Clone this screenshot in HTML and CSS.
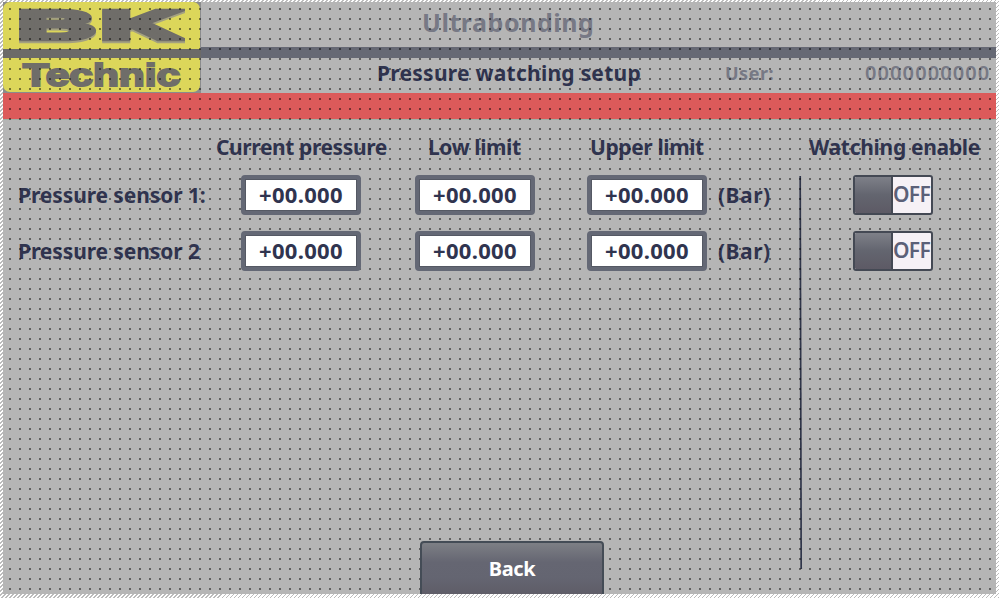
FILE: index.html
```html
<!DOCTYPE html>
<html lang="en">
<head>
<meta charset="utf-8">
<title>Pressure watching setup</title>
<link rel="stylesheet" href="styles.css">
</head>
<body>
<div class="frame">
<main class="screen">
  <header class="header">
    <svg class="logo" width="198" height="91" viewBox="0 0 198 91" aria-label="BK Technic">
      <path class="logo-corner" d="M0 0H198V91H0Z"/>
      <rect class="logo-plate" x="0" y="0" width="197" height="90" rx="7"/>
      <g class="logo-name">
        <text x="15" y="36.5" font-size="40" textLength="77" lengthAdjust="spacingAndGlyphs">B</text>
        <text x="98" y="36.5" font-size="40" textLength="79" lengthAdjust="spacingAndGlyphs">K</text>
      </g>
      <rect class="logo-bar" x="0" y="47" width="198" height="9"/>
      <text class="logo-sub" x="20" y="84" font-size="31" textLength="157" lengthAdjust="spacingAndGlyphs">Technic</text>
    </svg>
    <div class="heads">
      <div class="title"><span>Ultrabonding</span></div>
      <div class="rule"></div>
      <div class="subrow">
        <h1 class="subtitle">Pressure watching setup</h1>
        <span class="user">User:</span>
        <span class="user-id">0000000000</span>
      </div>
    </div>
  </header>
  <div class="alarm"></div>
  <div class="content">
    <section class="table">
      <span></span>
      <span class="label h1">Current pressure</span>
      <span class="label h2">Low limit</span>
      <span class="label h3">Upper limit</span>
      <span></span>

      <span class="label s1">Pressure sensor 1:</span>
      <span class="field"><span>+00.000</span></span>
      <span class="field"><span>+00.000</span></span>
      <span class="field"><span>+00.000</span></span>
      <span class="label unit">(Bar)</span>

      <span class="label s2">Pressure sensor 2</span>
      <span class="field"><span>+00.000</span></span>
      <span class="field"><span>+00.000</span></span>
      <span class="field"><span>+00.000</span></span>
      <span class="label unit">(Bar)</span>
    </section>
    <svg class="divider" width="4" height="393" viewBox="0 0 4 393"><path d="M1.2 0L2.2 393"/></svg>
    <section class="enable">
      <span class="label h4">Watching enable</span>
      <span class="switch"><i></i><b>OFF</b></span>
      <span class="switch"><i></i><b>OFF</b></span>
    </section>
  </div>
  <footer class="footer"><button class="back">Back</button></footer>
</main>
</div>
</body>
</html>
```
FILE: styles.css
```css
* { box-sizing: border-box; }
body { margin: 0; overflow: hidden; font-family: "Noto Sans", "Open Sans", sans-serif; font-weight: 600; }
.frame {
  width: 999px; height: 598px; padding: 2px 3px 4px 3px;
  background: repeating-linear-gradient(135deg, #fff 0 1.8px, #bcbcbc 1.8px 2.83px);
}
.screen {
  position: relative; width: 993px; height: 592px; overflow: hidden;
  display: flex; flex-direction: column; background: #b5b5b5; color: #30344f;
}
/* editor grid, drawn over static objects */
.screen::after {
  content: ""; position: absolute; inset: 0; z-index: 1; pointer-events: none;
  background: conic-gradient(from 270deg at 2px 2px, rgba(0,0,0,.47) 90deg, transparent 0) 6px 6px / 10px 10px;
}
.header { display: flex; height: 91px; }
.logo { display: block; flex: none; }
.logo-corner { fill: #8a8b8c; }
.logo-plate { fill: #dcd65a; }
.logo-bar { fill: #6b6a68; }
.logo-name, .logo-sub { font-family: "Liberation Sans", sans-serif; font-weight: 700; }
.logo-name { fill: #6f6d69; stroke: #6f6d69; stroke-width: 4.5; filter: drop-shadow(0 2px 0 #a3a080); }
.logo-sub { fill: #6f6d69; stroke: #6f6d69; stroke-width: 2; }
.heads { flex: 1; display: flex; flex-direction: column; }
.title { height: 45px; padding: 1px 0 0 221px; font-size: 25px; line-height: 39px; color: #777985; font-weight: 700; letter-spacing: .55px; }
.rule { height: 11px; background: #666974; }
.subrow { display: flex; height: 35px; padding-bottom: 5px; align-items: center; white-space: nowrap; }
.subtitle { margin: 0 0 0 176px; width: 348px; font: 700 21px/28px "Noto Sans", sans-serif; letter-spacing: .25px; }
.user { width: 140px; font-size: 18px; line-height: 28px; color: #777985; font-weight: 700; letter-spacing: .5px; }
.user-id { font-size: 20px; line-height: 28px; color: #777985; letter-spacing: 1.1px; }
.alarm { height: 27px; flex: none; background: #dc5a5a; border-bottom: 1px solid #a1afa4; }
.content { display: flex; height: 449px; flex: none; }
.label { white-space: nowrap; font-size: 21px; line-height: 28px; font-weight: 700; letter-spacing: -.4px; }
.table {
  width: 796px; padding-top: 13px; display: grid; align-content: start;
  grid-template-columns: 223px 174px 172px 146px 80px;
  grid-template-rows: 42px 56px 56px;
}
.s1, .s2 { padding-left: 15px; padding-top: 6px; letter-spacing: -.1px; }
.h1 { margin-left: -10px; }
.h2 { margin-left: 28px; }
.h3 { margin-left: 18px; }
.unit { padding: 6px 0 0 0; letter-spacing: .5px; }
.h1, .h2, .h3 { justify-self: start; }
.field {
  position: relative; z-index: 2; width: 120px; height: 40px; margin-left: 15px;
  border: 4px solid #646875; border-radius: 4px; background: #fff;
  box-shadow: inset 0 0 0 1px #555964;
  display: flex; align-items: center; justify-content: center;
  padding-bottom: 3px; font-size: 22px; line-height: 30px; font-weight: 700; letter-spacing: .3px;
}
.divider { flex: none; margin-top: 56px; }
.divider path { stroke: #30364a; stroke-width: 1.7; }
.enable { width: 193px; padding: 13px 0 0 6px; display: grid; grid-template-rows: 42px 56px 56px; align-content: start; }
.h4 { letter-spacing: -.3px; }
.switch {
  position: relative; z-index: 2; width: 80px; height: 40px; margin-left: 44px; display: flex;
  border: 2px solid #444954; border-radius: 3px; overflow: hidden; background: #f6f1f6;
}
.switch i { width: 38px; flex: none; border-right: 2px solid #444954; background: linear-gradient(#7e8088, #63656f 50%, #5d5a65); }
.switch b { font-size: 21px; line-height: 35px; font-weight: 600; color: #5b6078; letter-spacing: -.7px; }
.footer { margin-top: -28px; height: 53px; display: flex; flex: none; padding-left: 417px; }
.back {
  position: relative; z-index: 2; width: 184px; height: 62px; padding: 0 0 7px; border: 2px solid #444c56; border-radius: 4px;
  background: linear-gradient(#7d7f85, #656672 33%, #646571 60%, #5c5963);
  color: #fff; font: 700 20px/28px "Noto Sans", sans-serif; letter-spacing: -.4px;
}
```
